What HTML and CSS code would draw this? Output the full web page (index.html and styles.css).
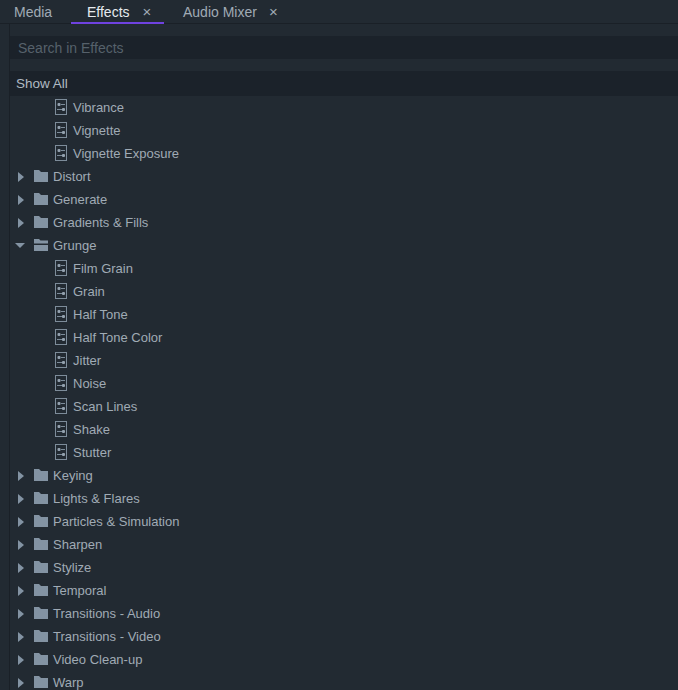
FILE: index.html
```html
<!DOCTYPE html>
<html lang="en">
<head>
<meta charset="utf-8">
<title>Effects</title>
<link rel="stylesheet" href="styles.css">
</head>
<body>
<svg class="defs" width="0" height="0" aria-hidden="true">
  <symbol id="fx" viewBox="0 0 12 16">
    <rect x="0.5" y="0.5" width="11" height="15" fill="none" stroke="#7d8c9a"/>
    <rect x="2.500" y="4" width="3" height="3" rx="1" fill="#93a1ae"/>
    <rect x="6" y="5" width="4" height="1" fill="#7d8c9a"/>
    <rect x="2" y="10" width="5" height="1" fill="#7d8c9a"/>
    <rect x="7" y="9" width="3" height="3" rx="1" fill="#93a1ae"/>
  </symbol>
  <symbol id="folder" viewBox="0 0 14 12">
    <path d="M0 0H5L7 2H14V12H0Z" fill="#8393a3"/>
  </symbol>
  <symbol id="folder-open" viewBox="0 0 14 12">
    <path d="M0 0H5L6.500 1.500H14V4.500H0Z M0 6H14V12H0Z" fill="#8393a3"/>
  </symbol>
</svg>
<nav class="tabs">
  <div class="tab tab-media">Media</div>
  <div class="tab tab-active">Effects<span class="close">×</span></div>
  <div class="tab tab-audio">Audio Mixer<span class="close close-audio">×</span></div>
</nav>
<main class="panel">
  <div class="search">Search in Effects</div>
  <div class="filter">Show All</div>
  <ul class="tree">
    <li class="row leaf"><svg class="fx"><use href="#fx"/></svg>Vibrance</li>
    <li class="row leaf"><svg class="fx"><use href="#fx"/></svg>Vignette</li>
    <li class="row leaf"><svg class="fx"><use href="#fx"/></svg>Vignette Exposure</li>
    <li class="row"><span class="arrow"></span><svg class="folder"><use href="#folder"/></svg>Distort</li>
    <li class="row"><span class="arrow"></span><svg class="folder"><use href="#folder"/></svg>Generate</li>
    <li class="row"><span class="arrow"></span><svg class="folder"><use href="#folder"/></svg>Gradients &amp; Fills</li>
    <li class="row"><span class="arrow arrow-open"></span><svg class="folder"><use href="#folder-open"/></svg>Grunge</li>
    <li class="row leaf"><svg class="fx"><use href="#fx"/></svg>Film Grain</li>
    <li class="row leaf"><svg class="fx"><use href="#fx"/></svg>Grain</li>
    <li class="row leaf"><svg class="fx"><use href="#fx"/></svg>Half Tone</li>
    <li class="row leaf"><svg class="fx"><use href="#fx"/></svg>Half Tone Color</li>
    <li class="row leaf"><svg class="fx"><use href="#fx"/></svg>Jitter</li>
    <li class="row leaf"><svg class="fx"><use href="#fx"/></svg>Noise</li>
    <li class="row leaf"><svg class="fx"><use href="#fx"/></svg>Scan Lines</li>
    <li class="row leaf"><svg class="fx"><use href="#fx"/></svg>Shake</li>
    <li class="row leaf"><svg class="fx"><use href="#fx"/></svg>Stutter</li>
    <li class="row"><span class="arrow"></span><svg class="folder"><use href="#folder"/></svg>Keying</li>
    <li class="row"><span class="arrow"></span><svg class="folder"><use href="#folder"/></svg>Lights &amp; Flares</li>
    <li class="row"><span class="arrow"></span><svg class="folder"><use href="#folder"/></svg>Particles &amp; Simulation</li>
    <li class="row"><span class="arrow"></span><svg class="folder"><use href="#folder"/></svg>Sharpen</li>
    <li class="row"><span class="arrow"></span><svg class="folder"><use href="#folder"/></svg>Stylize</li>
    <li class="row"><span class="arrow"></span><svg class="folder"><use href="#folder"/></svg>Temporal</li>
    <li class="row"><span class="arrow"></span><svg class="folder"><use href="#folder"/></svg>Transitions - Audio</li>
    <li class="row"><span class="arrow"></span><svg class="folder"><use href="#folder"/></svg>Transitions - Video</li>
    <li class="row"><span class="arrow"></span><svg class="folder"><use href="#folder"/></svg>Video Clean-up</li>
    <li class="row"><span class="arrow"></span><svg class="folder"><use href="#folder"/></svg>Warp</li>
  </ul>
</main>
</body>
</html>
```
FILE: styles.css
```css
* { box-sizing: border-box; }
html, body { margin: 0; height: 690px; overflow: hidden; }
body {
  background: #222a32;
  color: #a0abb5;
  font: 13px/23px "Liberation Sans", Arial, sans-serif;
}
.defs { display: block; height: 0; }
.tabs {
  display: flex;
  height: 24px;
  border-bottom: 1px solid #1a2027;
  font-size: 14px;
}
.tab {
  display: flex;
  height: 24px;
  line-height: 24px;
  color: #a0abb5;
  white-space: nowrap;
}
.tab-media { width: 71px; padding-left: 14px; }
.tab-active {
  width: 93px;
  padding-left: 16px;
  color: #e6eaee;
  border-bottom: 2px solid #6f42e0;
}
.tab-audio { padding-left: 19px; }
.close { margin-left: 13px; color: #a0abb5; font-size: 15px; line-height: 23px; }
.close-audio { margin-left: 12px; }
.panel {
  margin-left: 9px;
  padding-top: 12px;
  border-left: 1px solid #1a2027;
  height: 666px;
}
.search {
  height: 23px;
  margin-bottom: 12px;
  padding-left: 8px;
  background: #1b222a;
  color: #56616b;
  font-size: 14px;
  line-height: 24px;
}
.filter {
  height: 25px;
  padding-left: 6px;
  background: #1b222a;
  color: #b0bac3;
  font-size: 13.500px;
  line-height: 25px;
}
.tree { list-style: none; margin: 0; padding: 0; }
.row {
  display: flex;
  align-items: center;
  height: 23px;
  white-space: nowrap;
}
.leaf { padding-left: 45px; }
.fx { width: 12px; height: 16px; margin: -1px 6px 0 0; }
.arrow {
  width: 0;
  height: 0;
  margin: 0 10px 0 8px;
  border-style: solid;
  border-width: 5px 0 5px 6px;
  border-color: transparent transparent transparent #8393a3;
}
.arrow-open {
  margin: 0 9px 0 5px;
  border-width: 5px 5px 0 5px;
  border-color: #8393a3 transparent transparent transparent;
}
.folder { width: 14px; height: 12px; margin: -1px 5px 0 0; }
```
